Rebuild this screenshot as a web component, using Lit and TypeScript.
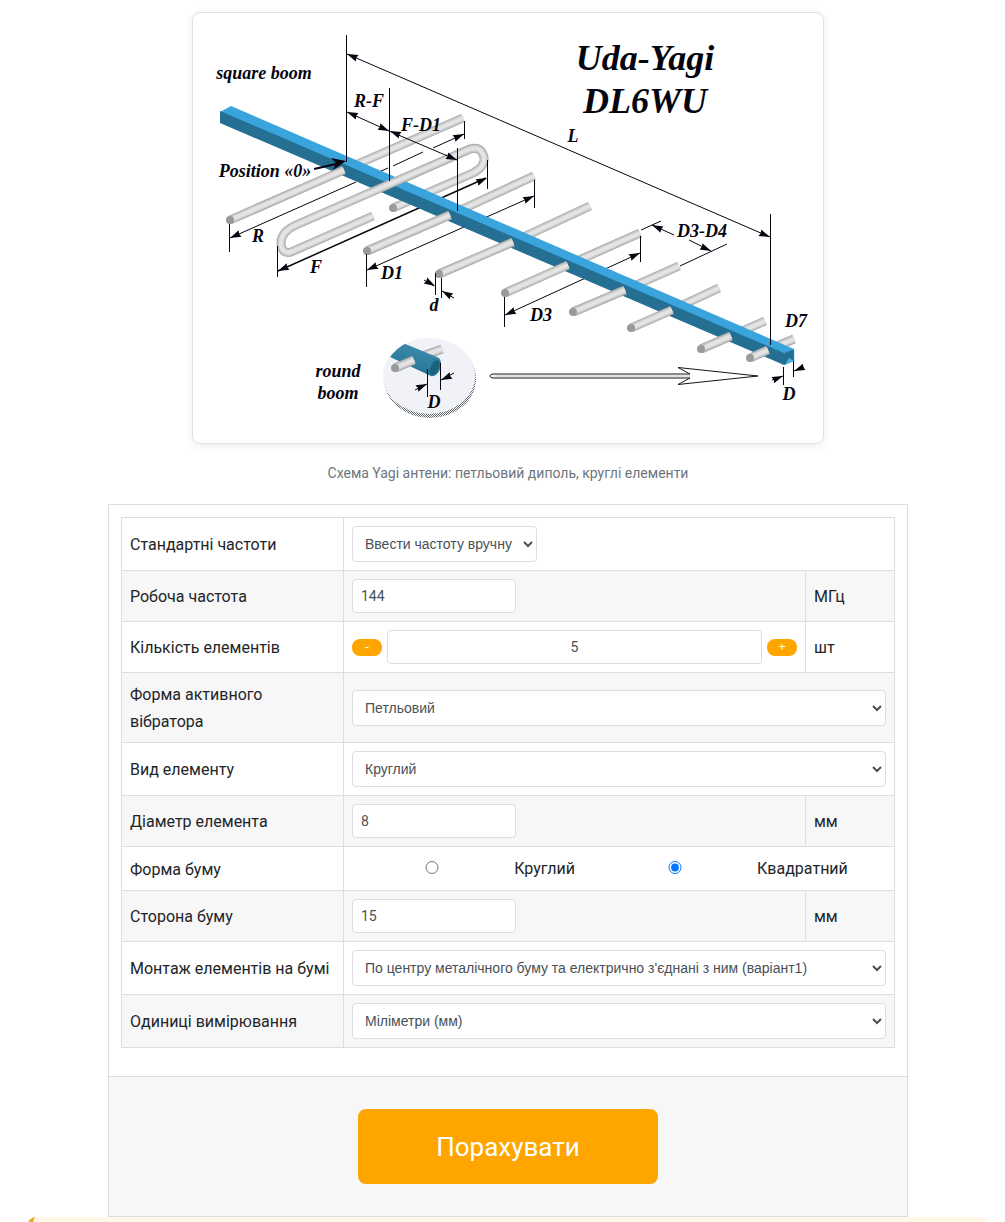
import { LitElement, html, css, svg } from "lit";
import { customElement, state } from "lit/decorators.js";

type Point = [number, number];

interface Rod {
  near: Point;
  joint: Point;
  far: Point;
}

const RODS: Rod[] = [
  { near: [230, 220], joint: [344, 170], far: [463, 118] },
  { near: [367, 251], joint: [450, 215], far: [534, 176] },
  { near: [439, 274], joint: [513, 242], far: [590, 206] },
  { near: [505, 293], joint: [568, 265], far: [640, 233] },
  { near: [573, 312], joint: [625, 290], far: [679, 266] },
  { near: [631, 328], joint: [672, 310], far: [719, 288] },
  { near: [701, 349], joint: [731, 336], far: [765, 321] },
  { near: [750, 358], joint: [768, 350], far: [794, 339] },
];

const LABELS: [number, number, string][] = [
  [264, 79, "square boom"],
  [265, 177, "Position «0»"],
  [369, 107, "R-F"],
  [421, 131, "F-D1"],
  [573, 142, "L"],
  [258, 242, "R"],
  [316, 273, "F"],
  [392, 279, "D1"],
  [434, 311, "d"],
  [541, 321, "D3"],
  [702, 237, "D3-D4"],
  [796, 327, "D7"],
  [789, 400, "D"],
  [434, 408, "D"],
  [338, 377, "round"],
  [338, 399, "boom"],
];

@customElement("antenna-diagram")
export class AntennaDiagram extends LitElement {
  static styles = css`
    :host {
      display: block;
    }
    .drawing {
      display: block;
      width: 100%;
      height: auto;
    }
    .label {
      font: italic bold 18px "Liberation Serif", "Times New Roman", serif;
      fill: #05050f;
      text-anchor: middle;
    }
    .title {
      font: italic bold 36px "Liberation Serif", "Times New Roman", serif;
      fill: #05050f;
      text-anchor: middle;
    }
    .line {
      stroke: #05050f;
      stroke-width: 1;
      fill: none;
    }
    .tube-edge {
      stroke: #a9a9a9;
      stroke-width: 9;
      fill: none;
    }
    .tube-body {
      stroke: #cbcbcb;
      stroke-width: 7;
      fill: none;
    }
    .tube-shine {
      stroke: #e4e4e4;
      stroke-width: 4;
      fill: none;
    }
    .cap {
      fill: #9a9a9a;
    }
  `;

  private tube(d: string) {
    return svg`
      <path class="tube-edge" d=${d} />
      <path class="tube-body" d=${d} />
      <path class="tube-shine" d=${d} />`;
  }

  private segment(a: Point, b: Point) {
    return this.tube(`M${a[0]} ${a[1]}L${b[0]} ${b[1]}`);
  }

  private arrow(tip: Point, angle: number) {
    return svg`<path
      d="M0 0L-11 -3.500L-10 0L-11 3.500Z"
      fill="#05050f"
      transform="translate(${tip[0]} ${tip[1]}) rotate(${angle})" />`;
  }

  render() {
    return html`
      <svg class="drawing" viewBox="193 13 630 430" role="img" aria-label="Uda-Yagi DL6WU">
        <defs>
          <linearGradient id="round" x1="0" y1="0" x2="-0.4" y2="1">
            <stop offset="0" stop-color="#3d88a8" />
            <stop offset="0.4" stop-color="#2b7c9e" />
            <stop offset="1" stop-color="#135a76" />
          </linearGradient>
          <pattern id="grain" width="2" height="2" patternUnits="userSpaceOnUse">
            <rect width="1" height="1" fill="#5d676d" />
            <rect x="1" y="1" width="1" height="1" fill="#5d676d" />
          </pattern>
          <clipPath id="disc"><ellipse cx="429" cy="376" rx="45" ry="38" /></clipPath>
        </defs>

        ${RODS.map((r) => this.segment(r.joint, r.far))}
        ${this.tube("M393 208L473 173C481 169 485 163 484 157C482 149 477 147 470 149L384 187")}
        <circle class="cap" cx="393" cy="208" r="4" />

        <path class="line" d="M230 238L356 182M372 175L388 168M393 166L423 152M433 148L464 134" />
        <path d="M278 271L486 178" stroke="#05050f" stroke-width="1.500" />
        <path class="line" d="M367 270L534 196" />
        <path class="line" d="M505 315L640 253" />

        <path d="M220 112L231 106L794 349L784 354Z" fill="#3aa4dc" />
        <path d="M220 111L784 353V365L220 123Z" fill="#246f92" />
        <path d="M784 353L794 349V361L784 365Z" fill="#246f92" />
        <path d="M785 365L789 358L794 361Z" fill="#4db2e6" />
        <path d="M784 353L794 349V361" fill="none" stroke="#3aa4dc" stroke-dasharray="1 1" />

        ${RODS.map(
          (r) => svg`${this.segment(r.near, r.joint)}
            <circle class="cap" cx=${r.near[0]} cy=${r.near[1]} r="4" />`,
        )}
        ${this.tube("M373 216L291 252C285 254 281 250 281 243C281 234 287 229 296 225L470 149")}

        <path class="line" d="M346.500 35V162M389.500 88V181M457.500 148V211M770.500 214V345" />
        <path class="line" d="M229.500 224V252M464.500 121V139M277.500 246V277M487.500 160V189" />
        <path class="line" d="M366.500 254V287M534.500 180V208M504.500 297V327M640.500 236V262" />
        <path class="line" d="M435.500 273V295M441.500 278V298M783.500 367V385M793.500 361V377" />
        <path class="line" d="M347 54L770 237M347 112L389 131L457 160" />
        <path class="line" d="M641 230L661 221M680 266L727 244M652 225L674 235M689 240L711 251" />
        <path class="line" d="M424 280L434 286M442 291L454 298M772 380L783 376M804 367L794 371" />
        <path d="M314 169L336 164" stroke="#05050f" stroke-width="2" />
        <path d="M346 161L331 158L336 163L333 170Z" fill="#05050f" />

        ${this.arrow([347, 54], 203)} ${this.arrow([770, 237], 23)}
        ${this.arrow([347, 112], 203)} ${this.arrow([389, 131], 24)}
        ${this.arrow([390, 131], 203)} ${this.arrow([457, 160], 23)}
        ${this.arrow([230, 238], 156)} ${this.arrow([464, 134], -24)}
        ${this.arrow([278, 271], 156)} ${this.arrow([487, 178], -24)}
        ${this.arrow([367, 270], 156)} ${this.arrow([534, 196], -24)}
        ${this.arrow([505, 315], 156)} ${this.arrow([640, 253], -24)}
        ${this.arrow([652, 225], 205)} ${this.arrow([711, 251], 25)}
        ${this.arrow([435, 286], 30)} ${this.arrow([442, 291], 210)}
        ${this.arrow([783, 376], -22)} ${this.arrow([794, 371], 158)}

        <ellipse cx="430" cy="379" rx="46" ry="39" fill="url(#grain)" />
        <ellipse cx="429" cy="376" rx="46" ry="38" fill="#f1f1f8" />
        <g clip-path="url(#disc)">
          ${this.segment([420, 357], [442, 349])}
          <path d="M388 356L398 341L437 357A6 9 20 0 1 431 376Z" fill="url(#round)" />
          <ellipse cx="434" cy="367" rx="6" ry="9" transform="rotate(20 434 367)" fill="#2f7f9f" />
          <path d="M429 372C431 363 435 359 439 361C441 367 437 375 431 375Z" fill="#1a627e" />
          ${this.segment([395, 368], [414, 360])}
          <circle class="cap" cx="395" cy="368" r="4" />
        </g>
        <path class="line" d="M427.500 369V397M440.500 363V390M415 390L427 384M454 373L441 380" />
        ${this.arrow([427, 384], -24)} ${this.arrow([441, 380], 156)}

        <path
          d="M690 374H494C491 374 490 375 490 376C490 377 491 378 494 378H690L678 384.500L758 376L678 367.500Z"
          fill="#fff"
          stroke="#15151c"
        />
        <path d="M494 376H690" stroke="#c9c2c9" />

        ${LABELS.map(([x, y, text]) => svg`<text class="label" x=${x} y=${y}>${text}</text>`)}
        <text class="title" x="645" y="70">Uda-Yagi</text>
        <text class="title" x="645" y="113">DL6WU</text>
      </svg>
    `;
  }
}

@customElement("app-root")
export class AppRoot extends LitElement {
  @state() private count = 5;

  static styles = css`
    :host {
      display: block;
      height: 100vh;
      overflow: hidden;
      background: #fff;
      color: #212529;
      font: 16px/27px Roboto, "Liberation Sans", sans-serif;
    }
    * {
      box-sizing: border-box;
    }
    .page {
      max-width: 1005px;
      margin: 0 auto;
      padding: 12px 17px 0 28px;
    }
    .figure {
      max-width: 632px;
      margin: 0 auto;
    }
    .card {
      border: 1px solid #dee2e6;
      border-radius: 8px;
      box-shadow: 0 2px 8px rgba(0, 0, 0, 0.08);
      overflow: hidden;
    }
    .caption {
      margin: 16px 0 17px;
      color: #6c757d;
      font-size: 14px;
      text-align: center;
    }
    .panel {
      max-width: 800px;
      margin: 0 auto;
      border: 1px solid #dcdde2;
    }
    .fields {
      padding: 12px 12px 28px;
    }
    .table {
      width: 100%;
      border-collapse: collapse;
      table-layout: fixed;
    }
    .name-col {
      width: 222px;
    }
    .unit-col {
      width: 89px;
    }
    .table tr:nth-child(even) {
      background: #f7f7f7;
    }
    .table td,
    .table th {
      border: 1px solid #dcdde2;
      padding: 8px;
      vertical-align: middle;
      text-align: left;
      font-weight: 400;
    }
    .table th {
      padding-bottom: 7px;
    }
    .input,
    .select {
      display: block;
      border: 1px solid #dcdde2;
      border-radius: 4px;
      background: #fff;
      color: #495057;
      font: 14px/20px Roboto, "Liberation Sans", sans-serif;
    }
    .input {
      width: 164px;
      height: 34px;
      padding: 6px 8px;
    }
    .select {
      width: 100%;
      height: 36px;
      padding: 0 0 0 8px;
      font-family: "Liberation Sans", Arial, sans-serif;
    }
    .select.short {
      width: 185px;
    }
    .stepper {
      display: flex;
      align-items: center;
      gap: 5px;
    }
    .stepper .input {
      flex: 1;
      min-width: 0;
      text-align: center;
    }
    .step {
      width: 30px;
      height: 17px;
      padding: 0;
      border: 0;
      border-radius: 8px;
      background: #ffa500;
      color: #fff;
      font: 13px/16px "Liberation Sans", Arial, sans-serif;
    }
    .choices {
      display: flex;
      align-items: center;
      gap: 2px;
    }
    .radio {
      width: 30%;
      height: 13px;
      margin: 0 0 2px;
    }
    .choice {
      margin-right: 18px;
    }
    .actions {
      display: flex;
      justify-content: center;
      padding: 32px;
      border-top: 1px solid #dcdde2;
      background: #f7f7f7;
    }
    .submit {
      width: 300px;
      height: 75px;
      border: 0;
      border-radius: 8px;
      background: #ffa500;
      color: #fff;
      font: 26px/32px Roboto, "Liberation Sans", sans-serif;
    }
    .notice {
      min-height: 60px;
      border-left: 5px solid #e6a817;
      border-radius: 8px;
      background: #fff8e6;
    }
  `;

  private step(delta: number) {
    this.count = Math.max(1, this.count + delta);
  }

  private selectRow(id: string, label: string, value: string) {
    return html`
      <tr>
        <th scope="row"><label for=${id}>${label}</label></th>
        <td colspan="2">
          <select class="select" id=${id}>
            <option>${value}</option>
          </select>
        </td>
      </tr>
    `;
  }

  private inputRow(id: string, label: string, value: string, unit: string) {
    return html`
      <tr>
        <th scope="row"><label for=${id}>${label}</label></th>
        <td><input class="input" id=${id} type="text" inputmode="decimal" .value=${value} /></td>
        <td>${unit}</td>
      </tr>
    `;
  }

  render() {
    return html`
      <main class="page">
        <figure class="figure">
          <div class="card"><antenna-diagram></antenna-diagram></div>
          <figcaption class="caption">Схема Yagi антени: петльовий диполь, круглі елементи</figcaption>
        </figure>
        <form class="panel" @submit=${(e: Event) => e.preventDefault()}>
          <div class="fields">
            <table class="table">
              <colgroup>
                <col class="name-col" />
                <col />
                <col class="unit-col" />
              </colgroup>
              <tbody>
                <tr>
                  <th scope="row"><label for="preset">Стандартні частоти</label></th>
                  <td colspan="2">
                    <select class="select short" id="preset">
                      <option>Ввести частоту вручну</option>
                    </select>
                  </td>
                </tr>
                ${this.inputRow("frequency", "Робоча частота", "144", "МГц")}
                <tr>
                  <th scope="row"><label for="count">Кількість елементів</label></th>
                  <td>
                    <div class="stepper">
                      <button class="step" type="button" @click=${() => this.step(-1)}>-</button>
                      <input class="input" id="count" type="text" inputmode="numeric" .value=${String(this.count)} />
                      <button class="step" type="button" @click=${() => this.step(1)}>+</button>
                    </div>
                  </td>
                  <td>шт</td>
                </tr>
                ${this.selectRow("dipole", "Форма активного вібратора", "Петльовий")}
                ${this.selectRow("profile", "Вид елементу", "Круглий")}
                ${this.inputRow("diameter", "Діаметр елемента", "8", "мм")}
                <tr>
                  <th scope="row">Форма буму</th>
                  <td colspan="2">
                    <div class="choices">
                      <input class="radio" type="radio" name="boom" id="boom-round" />
                      <label class="choice" for="boom-round">Круглий</label>
                      <input class="radio" type="radio" name="boom" id="boom-square" checked />
                      <label class="choice" for="boom-square">Квадратний</label>
                    </div>
                  </td>
                </tr>
                ${this.inputRow("side", "Сторона буму", "15", "мм")}
                ${this.selectRow(
                  "mount",
                  "Монтаж елементів на бумі",
                  "По центру металічного буму та електрично з'єднані з ним (варіант1)",
                )}
                ${this.selectRow("units", "Одиниці вимірювання", "Міліметри (мм)")}
              </tbody>
            </table>
          </div>
          <div class="actions">
            <button class="submit" type="submit">Порахувати</button>
          </div>
        </form>
        <aside class="notice"></aside>
      </main>
    `;
  }
}
